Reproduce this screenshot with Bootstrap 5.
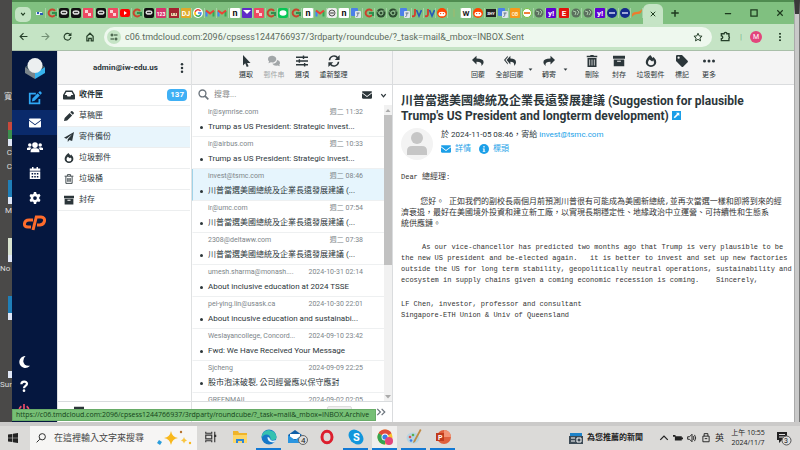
<!DOCTYPE html>
<html lang="zh-Hant">
<head>
    <meta charset="UTF-8">
    <meta name="viewport" content="width=device-width, initial-scale=1">
    <title>Roundcube Webmail</title>
    <link href="https://cdn.jsdelivr.net/npm/bootstrap@5.3.0/dist/css/bootstrap.min.css" rel="stylesheet">
    <style>
        body { font-family: Roboto, "Noto Sans CJK TC", sans-serif; font-size: 8px; line-height: 12px; color: #2c363a; background: #4a4948; }
        button, input { font-family: inherit; color: inherit; background: none; border: 0; padding: 0; }
        a { text-decoration: none; color: inherit; }
        svg { display: block; flex: none; }
        .ic { width: 12px; height: 12px; fill: currentColor; }
        .ic-sm { width: 10px; height: 10px; }
        .ic-lg { width: 14px; height: 14px; }
        .ic-line { fill: none; stroke: currentColor; stroke-width: 2; }

        /* desktop behind the window */
        .desk { width: 12px; color: #ddd; padding-top: 90px; line-height: 14px; white-space: nowrap; }
        .desk-item { height: 58px; }
        .desk-item:first-child { height: 32px; }
        .desk-pic { height: 24px; width: 4px; margin-left: 8px; border-bottom: 7px solid #dfe6f5; }
        .pic-green { background: #3d8f4c; border-top: 8px solid #c9493c; }
        .pic-blue { background: #1f7fb8; }
        .pic-page { background: #d9e3cf; }
        .edge { width: 6px; background: #c9c9c9; border-left: 1px solid #aaa; border-right: 1px solid #777; border-top: 14px solid #393939; }

        /* browser */
        .tabs { height: 24px; background: #80c080; border-top: 2px solid #4f8c50; color: #1d3a1e; }
        .tab-menu { width: 16px; height: 15px; margin: 2px 3px 0; border-radius: 5px; background: #c3e3c3; }
        .tab-item { height: 10px; border-right: 1px solid #a5d2a5; min-width: 0; }
        .fav { width: 10px; height: 10px; }
        .tab-on { width: 20px; height: 20px; border-radius: 6px 6px 0 0; background: #c5e4c5; }
        .win-btns { width: 131px; padding: 0 9px 0 6px; }
        .urlbar { height: 27px; background: #c5e4c5; border-bottom: 1px solid #a9bfa9; color: #26402a; padding: 0 8px 0 7px; }
        .urlbox { height: 20px; border-radius: 10px; background: #eef8ee; padding: 0 9px 0 3px; margin-left: 9px; }
        .url-info { width: 14px; height: 14px; border-radius: 7px; background: #c5e4c5; }
        .url-text { font-size: 9px; color: #5c6b5d; }
        .avatar-m { width: 12px; height: 12px; border-radius: 6px; background: #e2457c; color: #fff; font-size: 7px; }

        /* webmail */
        .side { width: 45px; background: #05173f; color: #fff; }
        .side-logo { height: 34px; }
        .side-link { height: 25px; }
        .side-link.on { background: #0a2a6b; }
        .side-foot { height: 24px; padding-left: 6px; }
        .side-edit { color: #2fa8f5; }
        .side-exit { color: #f0506a; }
        .folders { width: 135px; border-right: 1px solid #dfe1e2; border-left: 1px solid #dfe1e2; }
        .bar { height: 34px; background: #f4f4f4; border-bottom: 1px solid #dadcde; flex: none; }
        .user { font-size: 8px; font-weight: 700; }
        .folder { height: 21px; border-bottom: 1px solid #eceeef; padding: 0 3px 0 5px; margin-right: 1px; }
        .folder.on { background: #e8f5fc; }
        .count { background: #3fb0f5; color: #fff; border-radius: 4px; padding: 0 3px; font-size: 8px; }
        .foot { height: 21px; border-top: 1px solid #d9dcde; flex: none; }
        .mails { width: 201px; border-right: 1px solid #dadcde; }
        .tool { min-width: 27px; padding: 0 4px; font-size: 7px; line-height: 10px; gap: 3px; }
        .tool-off { color: #a2a6a8; }
        .caret { width: 8px; padding-top: 4px; }
        .caret-wide { margin-right: 8px; }
        .find { height: 20px; flex: none; padding: 0 5px 0 6px; }
        .find input { min-width: 0; font-size: 8px; outline: 0; }
        .find input::placeholder { color: #888; }
        .mail { height: 32px; border-bottom: 1px solid #eef0f1; padding: 1px 21px 0 15px; border-left: 1px solid transparent; }
        .mail.on { background: #e6f5fd; border-left-color: #9fd3e8; }
        .mail-top { font-size: 7px; line-height: 13px; color: #7d8589; }
        .mail-sub { font-size: 8px; line-height: 16px; padding-right: 5px; }
        .mail-sub.dot::before { content: ""; float: left; width: 3px; height: 3px; border-radius: 2px; background: #2c363a; margin: 7px 0 0 -8px; }
        .mail-title { display: block; }
        .scroll { width: 8px; background: #f1f1f1; color: #aaa; }
        .thumb { height: 150px; background: #c1c1c1; }
        .page-no { width: 25px; height: 12px; background: #eee; border: 1px solid #ddd; border-radius: 2px; }

        .subject { font-size: 12px; line-height: 15px; font-weight: 700; padding: 9px 0 0; margin: 0; }
        .face { width: 32px; height: 32px; }
        .meta { font-size: 8px; line-height: 14px; }
        .sky { color: #1b9fe8; }
        .letter { font-family: "Liberation Mono", "Noto Sans CJK TC", monospace; font-size: 7px; line-height: 11px; padding-top: 11px; color: #333; }
        .letter p { margin: 0 0 13px; white-space: pre; }
        .letter .han { font-size: 8px; }

        .status { left: 0; bottom: 1px; height: 12px; background: #76bf75; color: #14421a; padding: 0 6px 0 3px; font-family: "Open Sans", sans-serif; font-size: 7px; white-space: nowrap; border: 1px solid #68ac68; line-height: 10px; }

        /* taskbar */
        .task { height: 28px; background: #dbdad8; border-top: 4px solid #cbcac9; color: #222; flex: none; }
        .task-find { width: 167px; background: #f6f5f4; padding: 0 5px 0 6px; }
        .task-find input { font-size: 9px; min-width: 0; width: 98px; }
        .task-find input::placeholder { color: #444; opacity: 1; }
        .task-apps { padding-left: 1px; }
        .app { width: 25px; height: 24px; border-bottom: 2px solid transparent; }
        .app.open { border-bottom-color: #1379d4; }
        .app.front { background: #f0efee; }
        .app-ic { width: 16px; height: 16px; }
        .task-lang { font-size: 9px; }
        .clock { font-size: 7px; line-height: 10px; width: 48px; font-family: "Open Sans", "Noto Sans CJK TC", sans-serif; }
    </style>
</head>
<body class="vh-100 d-flex flex-column overflow-hidden">

    <svg class="d-none">
        <symbol id="i-down" viewBox="0 0 16 16"><path d="M3 5l5 6 5-6" fill="none" stroke="currentColor" stroke-width="3"/></symbol>
        <symbol id="i-caret" viewBox="0 0 16 16"><path d="M2 5h12l-6 7z"/></symbol>
        <symbol id="i-up" viewBox="0 0 16 16"><path d="M3 11l5-6 5 6z"/></symbol>
        <symbol id="i-x" viewBox="0 0 16 16"><path d="M2 2l12 12M14 2L2 14" stroke="currentColor" stroke-width="2.600"/></symbol>
        <symbol id="i-dots" viewBox="0 0 16 16"><circle cx="8" cy="2" r="2"/><circle cx="8" cy="8" r="2"/><circle cx="8" cy="14" r="2"/></symbol>
        <symbol id="i-more" viewBox="0 0 16 16"><circle cx="2" cy="8" r="2"/><circle cx="8" cy="8" r="2"/><circle cx="14" cy="8" r="2"/></symbol>
        <symbol id="i-left" viewBox="0 0 16 16"><path d="M15 8H3M8 2L2 8l6 6" fill="none" stroke="currentColor" stroke-width="2"/></symbol>
        <symbol id="i-right" viewBox="0 0 16 16"><path d="M1 8h12M8 2l6 6-6 6" fill="none" stroke="currentColor" stroke-width="2"/></symbol>
        <symbol id="i-reload" viewBox="0 0 16 16"><path d="M13 5a6 6 0 1 0 1 4" fill="none" stroke="currentColor" stroke-width="2"/><path d="M15 1v6H9z"/></symbol>
        <symbol id="i-home" viewBox="0 0 16 16"><path d="M3 14V7l5-5 5 5v7h-3v-4H6v4z" fill="none" stroke="currentColor" stroke-width="2"/></symbol>
        <symbol id="i-tune" viewBox="0 0 16 16"><path d="M8 4h7M1 12h7" stroke="currentColor" stroke-width="2"/><circle cx="4" cy="4" r="2" fill="none" stroke="currentColor" stroke-width="2"/><circle cx="12" cy="12" r="2" fill="none" stroke="currentColor" stroke-width="2"/></symbol>
        <symbol id="i-star" viewBox="0 0 16 16"><path d="M8 2l2 4.300 4.500.4-3.400 3 1 4.500L8 11.800l-4 2.400 1-4.500-3.500-3L6 6.300z" fill="none" stroke="currentColor" stroke-width="1.600"/></symbol>
        <symbol id="i-puzzle" viewBox="0 0 16 16"><path d="M2 4h4a2 2 0 0 1 4 0h3v4a2 2 0 0 1 0 3v3H2v-3a2 2 0 0 0 0-4z" fill="none" stroke="currentColor" stroke-width="2"/></symbol>
        <symbol id="i-edit" viewBox="0 0 16 16"><path d="M9 3H2v11h11V9" fill="none" stroke="currentColor" stroke-width="2"/><path d="M5 8.500l6-6 2.500 2.500-6 6L4.500 12zM11.800 1.800L13 .6a1 1 0 0 1 1.400 0l1 1a1 1 0 0 1 0 1.400l-1.200 1.200z"/></symbol>
        <symbol id="i-mail" viewBox="0 0 16 16"><path d="M0 3.500C0 2.700.7 2 1.500 2h13c.8 0 1.500.7 1.500 1.500L8 9.500zM0 5l8 6 8-6v7.500c0 .8-.7 1.500-1.500 1.500h-13C.7 14 0 13.300 0 12.500z"/></symbol>
        <symbol id="i-users" viewBox="0 0 20 16"><circle cx="3.500" cy="5" r="2.200"/><circle cx="16.500" cy="5" r="2.200"/><circle cx="10" cy="5" r="3.500"/><path d="M0 8.500Q3 7 5.500 8.300 4 10 4 11H0zM20 8.500Q17 7 14.500 8.300 16 10 16 11h4zM4.500 14v-2Q5 9 8 9h4q3 0 3.500 3v2z"/></symbol>
        <symbol id="i-cal" viewBox="0 0 16 16"><path fill-rule="evenodd" d="M4 0h2v2h4V0h2v2h3v3H1V2h3zM1 6h14v10H1zM3.500 8v2h2V8zM7 8v2h2V8zM10.500 8v2h2V8zM3.500 12v2h2v-2zM7 12v2h2v-2zM10.500 12v2h2v-2z"/></symbol>
        <symbol id="i-gear" viewBox="0 0 16 16"><path fill-rule="evenodd" d="M6.500 0h3l.5 2.300 1.600.9 2.200-.8 1.600 2.700L13.700 7v2l1.700 1.500-1.600 2.700-2.200-.7-1.600.9-.5 2.600h-3L6 13.400l-1.600-.9-2.200.7L.6 10.500 2.300 9V7L.6 5.200l1.600-2.700 2.200.7L6 2.300zM8 5.500a2.500 2.500 0 1 0 0 5 2.500 2.500 0 0 0 0-5z"/></symbol>
        <symbol id="i-moon" viewBox="0 0 16 16"><path d="M10 0a8 8 0 1 0 6 13Q8 14 7 7 7 2.500 10 0z"/></symbol>
        <symbol id="i-help" viewBox="0 0 16 16"><path d="M4.500 5.500C4.500 1 12 1 12 5c0 3-4 2.800-4 6" fill="none" stroke="currentColor" stroke-width="3"/><circle cx="8" cy="14.200" r="1.800"/></symbol>
        <symbol id="i-power" viewBox="0 0 16 16"><path d="M4.500 3a6.500 6.500 0 1 0 7 0M8 0v8" fill="none" stroke="currentColor" stroke-width="2.200"/></symbol>
        <symbol id="i-inbox" viewBox="0 0 16 16"><path fill-rule="evenodd" d="M3.500 2h9L16 8v5q0 1-1 1H1q-1 0-1-1V8zM4.500 4L2.200 8H5l1 2h4l1-2h2.800l-2.300-4z"/></symbol>
        <symbol id="i-pen" viewBox="0 0 16 16"><path d="M1 11l8-8 4 4-8 8-5 1zM10 2l1.500-1.500q1-.8 2 0l2 2q.8 1 0 2L14 6z"/></symbol>
        <symbol id="i-plane" viewBox="0 0 16 16"><path d="M16 0L0 9l4 1.700L13 3.500 6 11.500V16l2.500-3.200L13 14.500z"/></symbol>
        <symbol id="i-fire" viewBox="0 0 16 16"><path fill-rule="evenodd" d="M7 0q2 2 3 4l1.500-1.500Q15 6 15 9.500A7 6.500 0 0 1 1 9.500Q1 5 7 0zM6 6Q4 8 4 10a4 3.500 0 0 0 8 0q0-1.500-1-3L9.500 8.500z"/></symbol>
        <symbol id="i-bin" viewBox="0 0 16 16"><path d="M1 3.500h14M5.500 3V1h5v2M3 4v11h10V4M6 6.500v6M8 6.500v6M10 6.500v6" fill="none" stroke="currentColor" stroke-width="1.400"/></symbol>
        <symbol id="i-trash" viewBox="0 0 16 16"><path fill-rule="evenodd" d="M1 1h4.500l.5-1h4l.5 1H15v2H1zM2 4h12v12H2zM4.500 6v8h1V6zM7.500 6v8h1V6zM10.500 6v8h1V6z"/></symbol>
        <symbol id="i-box" viewBox="0 0 16 16"><path fill-rule="evenodd" d="M0 1h16v4H0zM1 6h14v9H1zM5.500 7.500v1.500h5V7.500z"/></symbol>
        <symbol id="i-search" viewBox="0 0 16 16"><circle cx="6.500" cy="6.500" r="5" fill="none" stroke="currentColor" stroke-width="2"/><path d="M10 10l5 5" stroke="currentColor" stroke-width="2.400"/></symbol>
        <symbol id="i-cursor" viewBox="0 0 16 16"><path d="M4 0v14l3-3 2 5 2.500-1-2-4.500H14z"/></symbol>
        <symbol id="i-chat" viewBox="0 0 16 16"><path d="M0 5.500a5.500 4.500 0 1 1 4 4.300L.5 11 1.500 8.500Q0 7 0 5.500zM12 6.500q4 .7 4 4 0 1.300-1 2.200l.8 2.300-3-1a6 4.500 0 0 1-7-2.500Q11.500 11.500 12 6.500z"/></symbol>
        <symbol id="i-sliders" viewBox="0 0 16 16"><path d="M0 3h16M0 8h16M0 13h16M10 .8v4.400M4.500 5.800v4.400M11.500 10.800v4.400" stroke="currentColor" stroke-width="1.900"/></symbol>
        <symbol id="i-sync" viewBox="0 0 16 16"><path d="M2 7a6 6 0 0 1 11-3M14 9a6 6 0 0 1-11 3" fill="none" stroke="currentColor" stroke-width="2"/><path d="M15.500 0v6.500H9zM.5 16V9.500H7z"/></symbol>
        <symbol id="i-reply" viewBox="0 0 16 16"><path d="M6 1v3.500q9.500 0 9.500 5 0 3-3 5 1.500-5.500-6.500-5.500V12.500L0 6.800z"/></symbol>
        <symbol id="i-replyall" viewBox="0 0 16 16"><path d="M8.500 1v3.500q7.500 0 7.500 5 0 3-2.500 5 1-5.500-5-5.500v3.500L3.500 6.800zM5 1v2L1.800 6.800 5 10.500v2L0 6.800z"/></symbol>
        <symbol id="i-forward" viewBox="0 0 16 16"><path d="M10 1v3.500q-9.500 0-9.500 5 0 3 3 5-1.500-5.500 6.500-5.500v3.500l6-5.700z"/></symbol>
        <symbol id="i-tag" viewBox="0 0 16 16"><path fill-rule="evenodd" d="M0 1.500Q0 0 1.500 0H8l7.500 7.500q.8 1 0 2l-6 6q-1 .8-2 0L0 8zM3.500 2a1.500 1.500 0 1 0 0 3 1.500 1.500 0 0 0 0-3z"/></symbol>
        <symbol id="i-ext" viewBox="0 0 16 16"><path d="M0 0h16v16H0z"/><path d="M7 3h6v6l-2-2-6 6-2-2 6-6z" fill="#fff"/></symbol>
        <symbol id="i-info" viewBox="0 0 16 16"><circle cx="8" cy="8" r="8"/><path d="M6 7h3v4h1v1.500H6V11h1V8.500H6zM7 3h2v2.500H7z" fill="#fff"/></symbol>
        <symbol id="i-next" viewBox="0 0 16 16"><path d="M2 3l5 5-5 5M9 3l5 5-5 5" fill="none" stroke="currentColor" stroke-width="2"/></symbol>
        <symbol id="i-win" viewBox="0 0 16 16"><path d="M0 2.500L7 1.500v6H0zM8 1.300L16 0v7.500H8zM0 8.500h7v6l-7-1zM8 8.500h8V16l-8-1.300z"/></symbol>
    </svg>

    <div class="d-flex flex-grow-1 overflow-hidden">
        <div class="desk overflow-hidden flex-shrink-0">
            <div class="desk-item text-end">寬</div>
            <div class="desk-item"><div class="desk-pic pic-green"></div><div class="text-end">C</div><div class="text-end">C</div></div>
            <div class="desk-item"><div class="desk-pic pic-blue"></div><div class="text-end">M</div></div>
            <div class="desk-item"><div class="desk-pic pic-page"></div><div>No</div></div>
            <div class="desk-item"><div class="desk-pic pic-blue"></div></div>
            <div class="desk-item"><div class="desk-pic"></div><div>Sur</div></div>
        </div>

        <div class="flex-grow-1 d-flex flex-column position-relative overflow-hidden bg-white">
            <div class="tabs d-flex align-items-center flex-shrink-0">
                <button class="tab-menu d-flex align-items-center justify-content-center" aria-label="Search tabs"><svg class="ic"><use href="#i-down" x="3" y="3" width="6" height="6"/></svg></button>
                <div id="tabs" class="d-flex flex-grow-1 overflow-hidden"></div>
                <button class="tab-on d-flex align-items-center justify-content-center align-self-end" aria-label="Close tab"><svg class="ic" viewBox="-8 -8 32 32"><use href="#i-x" width="16" height="16"/></svg></button>
                <div class="win-btns d-flex align-items-center justify-content-between">
                    <button aria-label="New tab"><svg class="ic" viewBox="0 0 16 16"><path d="M8 4v9M3 8h10" stroke="currentColor" stroke-width="2"/></svg></button>
                    <div class="d-flex gap-3">
                        <button aria-label="Minimize"><svg class="ic ic-sm" viewBox="0 0 16 16"><path d="M3 9h10" stroke="currentColor" stroke-width="2"/></svg></button>
                        <button aria-label="Maximize"><svg class="ic ic-sm" viewBox="0 0 16 16"><path class="ic-line" d="M3 3h10v10H3z"/></svg></button>
                        <button aria-label="Close"><svg class="ic ic-sm" viewBox="-3 -3 22 22"><use href="#i-x" width="16" height="16"/></svg></button>
                    </div>
                </div>
            </div>
            <div class="urlbar d-flex align-items-center flex-shrink-0">
                <div class="d-flex gap-2 align-items-center">
                    <button class="pe-1" aria-label="Back"><svg class="ic ic-sm"><use href="#i-left" width="9" height="9"/></svg></button>
                    <button class="pe-1 opacity-50" aria-label="Forward"><svg class="ic ic-sm"><use href="#i-right" width="9" height="9"/></svg></button>
                    <button class="pe-1" aria-label="Reload"><svg class="ic ic-sm"><use href="#i-reload" width="9" height="9"/></svg></button>
                    <button aria-label="Home"><svg class="ic ic-sm"><use href="#i-home" width="10" height="10"/></svg></button>
                </div>
                <div class="urlbox d-flex align-items-center flex-grow-1 gap-1">
                    <span class="url-info d-flex align-items-center justify-content-center"><svg class="ic"><use href="#i-tune" x="2" y="2" width="8" height="8"/></svg></span>
                    <input class="url-text flex-grow-1" aria-label="Address" value="c06.tmdcloud.com:2096/cpsess1244766937/3rdparty/roundcube/?_task=mail&amp;_mbox=INBOX.Sent">
                    <svg class="ic ic-sm"><use href="#i-star"/></svg>
                </div>
                <div class="d-flex align-items-center gap-2 ps-2">
                    <svg class="ic"><use href="#i-puzzle" width="11" height="11"/></svg>
                    <span class="text-success opacity-50">|</span>
                    <span class="avatar-m text-center">M</span>
                    <svg class="ic ms-1" viewBox="-3 -3 22 22"><use href="#i-dots" width="16" height="16"/></svg>
                </div>
            </div>

            <div class="d-flex flex-grow-1 overflow-hidden">
                <nav class="side d-flex flex-column flex-shrink-0">
                    <div class="side-logo d-flex align-items-center justify-content-center">
                        <svg width="20" height="21" viewBox="0 0 20 21"><path d="M0 9l10 6v6L0 15z" fill="#7b858b"/><path d="M20 9l-10 6v6l10-6z" fill="#37b3ee"/><path d="M0 9l10-6 10 6-10 6z" fill="#455a64"/><circle cx="10" cy="7.500" r="7.500" fill="#eceff0"/></svg>
                    </div>
                    <a href="#" class="side-link side-edit d-flex align-items-center justify-content-center" aria-label="Compose"><svg class="ic ic-lg"><use href="#i-edit"/></svg></a>
                    <a href="#" class="side-link on d-flex align-items-center justify-content-center" aria-label="Mail"><svg class="ic"><use href="#i-mail"/></svg></a>
                    <a href="#" class="side-link d-flex align-items-center justify-content-center" aria-label="Contacts"><svg width="16" height="13" fill="currentColor"><use href="#i-users"/></svg></a>
                    <a href="#" class="side-link d-flex align-items-center justify-content-center" aria-label="Calendar"><svg class="ic"><use href="#i-cal"/></svg></a>
                    <a href="#" class="side-link d-flex align-items-center justify-content-center" aria-label="Settings"><svg class="ic"><use href="#i-gear"/></svg></a>
                    <a href="#" class="side-link d-flex align-items-center justify-content-center" aria-label="cPanel">
                        <svg width="23" height="16" viewBox="0 0 23 16" fill="none" stroke="#ff6c2c" stroke-width="3"><path d="M10 5H6q-4 0-4.500 3.500T5 12h3M10 15l3.300-13H18q4 .5 3.500 4T17 10h-3"/></svg>
                    </a>
                    <div class="flex-grow-1"></div>
                    <a href="#" class="side-foot d-flex align-items-center" aria-label="Dark mode"><svg class="ic"><use href="#i-moon"/></svg></a>
                    <a href="#" class="side-foot d-flex align-items-center" aria-label="About"><svg class="ic"><use href="#i-help"/></svg></a>
                    <a href="#" class="side-foot side-exit d-flex align-items-center" aria-label="Logout"><svg class="ic"><use href="#i-power"/></svg></a>
                </nav>

                <div class="folders d-flex flex-column flex-shrink-0">
                    <div class="bar d-flex align-items-center">
                        <span class="user flex-grow-1 text-center ps-3">admin@iw-edu.us</span>
                        <button class="pe-1" aria-label="Menu"><svg class="ic ic-sm"><use href="#i-dots"/></svg></button>
                    </div>
                    <a href="#" class="folder d-flex align-items-center gap-1 fw-bold"><svg class="ic"><use href="#i-inbox"/></svg>收件匣<span class="count ms-auto">137</span></a>
                    <a href="#" class="folder d-flex align-items-center gap-1"><svg class="ic"><use href="#i-pen" x="1" y="1" width="10" height="10"/></svg>草稿匣</a>
                    <a href="#" class="folder on d-flex align-items-center gap-1"><svg class="ic"><use href="#i-plane" x="1" y="1" width="10" height="10"/></svg>寄件備份</a>
                    <a href="#" class="folder d-flex align-items-center gap-1"><svg class="ic"><use href="#i-fire" x="1" y="1" width="10" height="10"/></svg>垃圾郵件</a>
                    <a href="#" class="folder d-flex align-items-center gap-1"><svg class="ic"><use href="#i-bin" x="1" y="1" width="10" height="10"/></svg>垃圾桶</a>
                    <a href="#" class="folder d-flex align-items-center gap-1"><svg class="ic"><use href="#i-box" x="1" y="1" width="10" height="10"/></svg>封存</a>
                    <div class="foot mt-auto ps-3 pt-1"><svg class="ic ic-sm"><use href="#i-box"/></svg></div>
                </div>

                <div class="mails d-flex flex-column flex-shrink-0">
                    <div class="bar d-flex justify-content-center align-items-center">
                        <button class="tool d-flex flex-column align-items-center"><svg class="ic"><use href="#i-cursor"/></svg>選取</button>
                        <button class="tool tool-off d-flex flex-column align-items-center"><svg class="ic"><use href="#i-chat"/></svg>郵件串</button>
                        <button class="tool d-flex flex-column align-items-center"><svg class="ic"><use href="#i-sliders"/></svg>選項</button>
                        <button class="tool d-flex flex-column align-items-center"><svg class="ic"><use href="#i-sync"/></svg>重新整理</button>
                    </div>
                    <div class="find d-flex align-items-center gap-1">
                        <svg class="ic text-secondary"><use href="#i-search" width="11" height="11"/></svg>
                        <input class="flex-grow-1" placeholder="搜尋..." aria-label="搜尋">
                        <svg class="ic ic-sm me-1"><use href="#i-mail"/></svg>
                        <svg width="7" height="7"><use href="#i-down"/></svg>
                    </div>
                    <div class="d-flex flex-grow-1 overflow-hidden">
                        <div id="mails" class="flex-grow-1 overflow-hidden"></div>
                        <div class="scroll d-flex flex-column">
                            <svg class="ic ic-sm" viewBox="0 -3 20 20"><use href="#i-up" width="16" height="16"/></svg>
                            <div class="thumb"></div>
                            <svg class="ic ic-sm mt-auto" viewBox="0 -3 20 20"><use href="#i-caret" width="16" height="16"/></svg>
                        </div>
                    </div>
                    <div class="foot d-flex justify-content-end align-items-start pt-1 gap-4 pe-1">
                        <span class="page-no"></span>
                        <button class="text-secondary" aria-label="Last page"><svg class="ic"><use href="#i-next" y="1" width="10" height="10"/></svg></button>
                    </div>
                </div>

                <main class="flex-grow-1 d-flex flex-column overflow-hidden">
                    <div class="bar d-flex justify-content-center align-items-center">
                        <button class="tool d-flex flex-column align-items-center"><svg class="ic"><use href="#i-reply"/></svg>回覆</button>
                        <button class="tool d-flex flex-column align-items-center"><svg class="ic"><use href="#i-replyall"/></svg>全部回覆</button>
                        <button class="caret" aria-label="Reply options"><svg width="5" height="5" fill="currentColor"><use href="#i-caret"/></svg></button>
                        <button class="tool d-flex flex-column align-items-center"><svg class="ic"><use href="#i-forward"/></svg>轉寄</button>
                        <button class="caret caret-wide" aria-label="Forward options"><svg width="5" height="5" fill="currentColor"><use href="#i-caret"/></svg></button>
                        <button class="tool d-flex flex-column align-items-center"><svg class="ic"><use href="#i-trash"/></svg>刪除</button>
                        <button class="tool d-flex flex-column align-items-center"><svg class="ic"><use href="#i-box"/></svg>封存</button>
                        <button class="tool d-flex flex-column align-items-center"><svg class="ic"><use href="#i-fire"/></svg>垃圾郵件</button>
                        <button class="tool d-flex flex-column align-items-center"><svg class="ic"><use href="#i-tag"/></svg>標記</button>
                        <button class="tool d-flex flex-column align-items-center"><svg class="ic"><use href="#i-more"/></svg>更多</button>
                    </div>
                    <div class="px-2">
                        <h1 class="subject">川普當選美國總統及企業長遠發展建議 (Suggestion for plausible<br>Trump's US President and longterm development) <a href="#" class="sky d-inline-block" aria-label="Open in new window"><svg width="9" height="9" fill="currentColor"><use href="#i-ext"/></svg></a></h1>
                        <div class="d-flex gap-2 pt-1">
                            <svg class="face" viewBox="0 0 32 32"><circle cx="16" cy="16" r="16" fill="#f3f3f3"/><circle cx="16" cy="10" r="6" fill="#c6c6c6"/><path d="M6 27v-4q0-5 5-5h10q5 0 5 5v4z" fill="#c6c6c6"/></svg>
                            <div class="meta">
                                <div>於 2024-11-05 08:46，寄給 <a href="#" class="sky">invest@tsmc.com</a></div>
                                <div class="d-flex gap-2 sky">
                                    <a href="#" class="d-flex align-items-center gap-1"><svg class="ic ic-sm"><use href="#i-mail"/></svg>詳情</a>
                                    <a href="#" class="d-flex align-items-center gap-1"><svg class="ic ic-sm"><use href="#i-info"/></svg>標頭</a>
                                </div>
                            </div>
                        </div>
                        <div class="letter">
<p>Dear <span class="han">總經理</span>:</p>
<p class="han">    您好。 正如我們的副校長兩個月前預測川普很有可能成為美國新總統,並再次當選一樣和即將到來的經
濟衰退，最好在美國境外投資和建立新工廠，以實現長期穩定性、地緣政治中立運營、可持續性和生態系
統供應鏈。</p>
<p>     As our vice-chancellor has predicted two months ago that Trump is very plausible to be
the new US president and be-elected again.   it is better to invest and set up new factories
outside the US for long term stability, geopolitically neutral operations, sustainability and
ecosystem in supply chains given a coming economic recession is coming.    Sincerely,</p>
<p>LF Chen, investor, professor and consultant
Singapore-ETH Union &amp; Univ of Queensland</p>
                        </div>
                    </div>
                </main>
            </div>
            <div class="status position-absolute">https://c06.tmdcloud.com:2096/cpsess1244766937/3rdparty/roundcube/?_task=mail&amp;_mbox=INBOX.Archive</div>
        </div>
        <div class="edge flex-shrink-0"></div>
    </div>

    <footer class="task d-flex">
        <button class="px-2 d-flex align-items-center" aria-label="Start"><svg class="ic ic-sm"><use href="#i-win"/></svg></button>
        <div class="task-find d-flex align-items-center gap-2 ms-1">
            <svg class="ic ic-sm" viewBox="0 0 16 16"><circle cx="10" cy="6" r="5" fill="none" stroke="currentColor" stroke-width="1.500"/><path d="M6 10l-5 5" stroke="currentColor" stroke-width="1.500"/></svg>
            <input placeholder="在這裡輸入文字來搜尋" aria-label="Search">
            <svg width="36" height="18" viewBox="0 0 36 18"><path d="M15 2q1 6 7 7-6 1-7 7-1-6-7-7 6-1 7-7z" fill="#f8b81c"/><path d="M28 8q.5 3 3 3.500-2.500.5-3 3-.5-2.500-3-3 2.500-.5 3-3.500z" fill="#f8c541"/><path d="M3 11l3 2-2 3-3-2z" fill="#2a9ddb"/><circle cx="25" cy="3" r="1.200" fill="#b5722d"/><circle cx="34" cy="14" r="1.200" fill="#f8b81c"/></svg>
        </div>
        <div class="task-apps d-flex gap-1">
            <button class="app d-flex align-items-center justify-content-center" aria-label="Task view"><svg class="ic" viewBox="0 0 16 16"><path d="M1 1v2h8V1M1 15v-2h8v2M1 5.500h8v5H1zM13 1v14" fill="none" stroke="#333" stroke-width="1.500"/><path d="M12 5h3v3h-3z" fill="#333"/></svg></button>
            <button class="app d-flex align-items-center justify-content-center" aria-label="File Explorer"><svg class="app-ic" viewBox="0 0 16 16"><path d="M1 2h5l1 2h8v10H1z" fill="#f0b429"/><path d="M1 6h14v8H1z" fill="#fcd667"/><path d="M4 14v-4h8v4h-2v-2H6v2z" fill="#2f86d6"/></svg></button>
            <button class="app open d-flex align-items-center justify-content-center" aria-label="Edge"><svg class="app-ic" viewBox="0 0 16 16"><circle cx="8" cy="8" r="7.500" fill="#1677c8"/><path d="M.7 7A7.500 7.500 0 0 1 15.500 8q0 3-3.500 3-3 0-2.500-2Q9 5.500 5.500 5.500T.7 9z" fill="#35c1b0"/><path d="M6.500 8Q6 13 12.500 13.500 15 12 15 11q-5 2-6-1-.5-2-2.500-2z" fill="#e5f3fb"/></svg></button>
            <button class="app d-flex align-items-center justify-content-center" aria-label="Mail"><svg width="20" height="16" viewBox="0 0 20 16"><path d="M0 6l7-5 7 5v8H0z" fill="#0f5fa8"/><path d="M2 5h10v5H2z" fill="#fff"/><path d="M0 6l7 5 7-5v8H0z" fill="#2a95e0"/><circle cx="15" cy="11" r="4.500" fill="#ddd" stroke="#666"/><text x="13" y="14" font-size="8" fill="#222">4</text></svg></button>
            <button class="app d-flex align-items-center justify-content-center" aria-label="Opera"><svg class="app-ic" viewBox="0 0 16 16"><ellipse cx="8" cy="8" rx="5" ry="5.800" fill="none" stroke="#dc1e2d" stroke-width="3"/></svg></button>
            <button class="app open d-flex align-items-center justify-content-center" aria-label="Skype"><svg class="app-ic" viewBox="0 0 16 16"><circle cx="6" cy="6" r="5.500" fill="#1296dc"/><circle cx="10" cy="10" r="5.500" fill="#1296dc"/><circle cx="8" cy="8" r="6.500" fill="#1296dc"/><text x="5" y="12" font-size="11" font-weight="700" fill="#fff">S</text></svg></button>
            <button class="app open front d-flex align-items-center justify-content-center" aria-label="Chrome"><svg class="app-ic" viewBox="0 0 16 16"><circle cx="8" cy="8" r="7.500" fill="#f9c22e"/><path d="M8 8L1.500 4.200a7.500 7.500 0 0 1 13 0z" fill="#e04a3a"/><path d="M8 8L1.500 4.200A7.500 7.500 0 0 0 8 15.500z" fill="#35a552"/><circle cx="8" cy="8" r="3.500" fill="#fff"/><circle cx="8" cy="8" r="2.600" fill="#3b7de9"/><circle cx="12" cy="12" r="4" fill="#e2457c"/></svg></button>
            <button class="app open d-flex align-items-center justify-content-center" aria-label="Paint"><svg class="app-ic" viewBox="0 0 16 16"><ellipse cx="7" cy="9" rx="6.500" ry="5.500" fill="#b6d5e3"/><circle cx="4" cy="8" r="1.300" fill="#d9534f"/><circle cx="7" cy="6" r="1.300" fill="#5aaf4c"/><circle cx="5" cy="11.500" r="1.300" fill="#3b7de9"/><path d="M14 0l1.500 1L9 13l-2 1 .5-2z" fill="#c08a43"/></svg></button>
            <button class="app open d-flex align-items-center justify-content-center" aria-label="PowerPoint"><svg class="app-ic" viewBox="0 0 16 16"><circle cx="9" cy="8" r="7" fill="#e0613d"/><path d="M9 1a7 7 0 0 1 7 7H9z" fill="#f39475"/><path d="M1 4h8v8H1z" fill="#c13b1b"/><text x="3" y="11" font-size="7" font-weight="700" fill="#fff">P</text></svg></button>
        </div>
        <div class="ms-auto d-flex align-items-center pe-2">
            <svg class="me-1" width="14" height="11" viewBox="0 0 14 11"><path d="M1 0h12v3H1z" fill="#1d83c9"/><path d="M0 3h14v8H0z" fill="#3c4a55"/><path d="M2 5h4M2 8h4M8 5h4v4H8z" stroke="#fff" fill="none"/></svg>
            <span class="fw-bold me-3">為您推薦的新聞</span>
            <svg class="ic ic-sm me-1" viewBox="0 0 16 16"><path d="M2 11l6-6 6 6" fill="none" stroke="currentColor" stroke-width="2"/></svg>
            <svg class="ic ic-sm me-1" viewBox="0 0 16 16"><path d="M3 5h11v7H3zM14 7h2v3h-2zM0 3h4v3H0z"/></svg>
            <svg class="ic ic-sm me-1" viewBox="0 0 16 16"><path d="M1 6h3l4-4v12l-4-4H1zM10 5q2 3 0 6M12 3q4 5 0 10" fill="none" stroke="currentColor" stroke-width="1.500"/></svg>
            <svg class="ic ic-sm me-1" viewBox="0 0 16 16"><path d="M3 5h10v9H3zM5 5V1h6v4M6 9h4" fill="none" stroke="currentColor" stroke-width="1.500"/></svg>
            <span class="task-lang">英</span>
            <div class="clock text-center">上午 10:55<br>2024/11/7</div>
            <svg class="ms-1" width="16" height="16" viewBox="0 0 16 16"><path d="M1 2h10v8H6l-3 3v-3H1z" fill="#222"/><path d="M3 4.500h6M3 7h6" stroke="#ddd"/><circle cx="10.500" cy="10.500" r="4.500" fill="#ddd" stroke="#555"/><text x="8" y="13" font-size="7" fill="#222">3</text></svg>
        </div>
    </footer>

    <script>
        const square = (bg, text = '', color = '#fff', size = 7) =>
            `<rect width="10" height="10" rx="1" fill="${bg}"/><text x="5" y="8" font-size="${size}" font-weight="700" text-anchor="middle" fill="${color}">${text}</text>`;
        const icons = {
            iw: '<path d="M1 4h6v3H1z" fill="#e8eefc"/><path d="M2 5h2M5 6h3" stroke="#2b58b8" stroke-width="2"/>',
            c: '<path d="M8 3a3.500 3.500 0 1 0 0 4" fill="none" stroke="#c8452f" stroke-width="2"/><path d="M5 5h4v3" fill="none" stroke="#2f8f4e" stroke-width="2"/>',
            bk: '<rect width="10" height="10" rx="2" fill="#111"/><ellipse cx="5" cy="4.500" rx="3.500" ry="2.300" fill="#ddd"/><path d="M3 4.500h4" stroke="#333" stroke-width="1.200"/>',
            pk: '<rect width="10" height="10" rx="1" fill="#ee4861"/><path d="M2 2h3v3H2zM5 5h3v3H5z" fill="#fbd0d6"/>',
            yt: '<rect y="1" width="10" height="8" rx="2" fill="#f00"/><path d="M4 3l3 2-3 2z" fill="#fff"/>',
            num: square('#d6336c', '123', '#fff', 5),
            fc: '<rect width="10" height="10" fill="#a3232f"/><path d="M2 5h6v3H2z" fill="#f1c9a5"/><path d="M3 6h1M6 6h1" stroke="#222"/>',
            dj: square('#e0a92a', 'DJ', '#fff', 7),
            go: '<circle cx="5" cy="5" r="5" fill="#fff"/><path d="M7.500 3A3 3 0 0 0 2.200 4" fill="none" stroke="#ea4335" stroke-width="1.500"/><path d="M2.200 4a3 3 0 0 0 1 3.500" fill="none" stroke="#fbbc05" stroke-width="1.500"/><path d="M3 7.300A3 3 0 0 0 7.500 7" fill="none" stroke="#34a853" stroke-width="1.500"/><path d="M5 5h3q0 1.500-.8 2.200" fill="none" stroke="#4285f4" stroke-width="1.500"/>',
            gm: '<path d="M1.500 8.500V3" stroke="#4285f4" stroke-width="2"/><path d="M8.500 8.500V3" stroke="#34a853" stroke-width="2"/><path d="M1 2.500l4 3 4-3" fill="none" stroke="#ea4335" stroke-width="2"/>',
            n: square('#fff', 'n', '#111', 9),
            ml: '<rect width="10" height="10" rx="1" fill="#5f2bc8"/><path d="M1 2h8L5 6z" fill="#fff"/>',
            ln: '<rect width="10" height="10" rx="2" fill="#06c755"/><ellipse cx="5" cy="5" rx="3.500" ry="2.700" fill="#fff"/>',
            gp: '<rect width="10" height="10" rx="2" fill="#eee"/><circle cx="5" cy="5" r="3" fill="none" stroke="#555"/><path d="M3 4l4 2M3 6l4-2" stroke="#555" stroke-width=".7"/>',
            tr: '<rect width="7" height="8" rx="1" fill="#4a80e8"/><rect x="4" y="3" width="6" height="7" rx="1" fill="#dfe5ec"/><path d="M5.500 5h3M7 5q0 3-1.500 4" fill="none" stroke="#678"/>',
            ch: '<circle cx="5" cy="5" r="4.500" fill="#2d4d31"/><circle cx="5" cy="5" r="2" fill="none" stroke="#9fd09f"/><path d="M5 3h4M3 6L1.500 3" stroke="#9fd09f" stroke-width=".7"/>',
            jv: '<path d="M3 1v5q0 3-3 2" fill="none" stroke="#d63c2c" stroke-width="1.800"/><path d="M4.500 2L7 8l2.500-6" fill="none" stroke="#2659b8" stroke-width="1.600"/>',
            rd: '<circle cx="5" cy="5" r="5" fill="#ff4500"/><ellipse cx="5" cy="6" rx="3.500" ry="2.300" fill="#fff"/><circle cx="3.600" cy="5.600" r=".7" fill="#f40"/><circle cx="6.400" cy="5.600" r=".7" fill="#f40"/>',
            ft: '<path d="M5 1v8" stroke="#a4b86b"/>',
            w: square('#fff', 'W', '#222', 8),
            sh: '<rect y="1" width="10" height="8" fill="#222"/><text x="5" y="7" font-size="4" font-weight="700" text-anchor="middle" fill="#fff">SHY</text>',
            ob: square('#f59a1b', 'OB', '#ffe9c7', 5),
            bl: '<circle cx="5" cy="5" r="4.500" fill="#fff" stroke="#7ac143"/><path d="M2 5h6" stroke="#f0803c" stroke-width="2"/>',
            gl: '<circle cx="5" cy="5" r="4.500" fill="#5b6f5e"/><path d="M2 3l3 1-1 3M6 2l2 2-2 3" fill="none" stroke="#a9c9a9"/>',
            y: square('#5f01d1', 'y!', '#fff', 8),
            e: square('#e3120b', 'E', '#fff', 8),
            nv: '<circle cx="5" cy="5" r="5" fill="#15298c"/><path d="M2 5h6" stroke="#cfd6f5" stroke-width="1.500"/>',
            or: '<path d="M0 7q0-3 4-3t6-3q0 5-4 5T0 9z" fill="#ee7b2d"/>'
        };
        const openTabs = 'iw c bk bk pk bk pk yt c bk num fc dj go gm gm n ml pk c ln c n gm gp n tr c ch ch tr jv jv rd ft w rd sh tr ob bl gl y e gl gl y nv nv or';
        document.getElementById('tabs').innerHTML = openTabs.split(' ').map(k =>
            `<div class="tab-item d-flex flex-fill justify-content-center"><svg class="fav" viewBox="0 0 10 10">${icons[k]}</svg></div>`).join('');

        const zh = '川普當選美國總統及企業長遠發展建議 (...';
        const mails = [
            ['ir@symrise.com', '週二 11:32', 'Trump as US President: Strategic Invest...'],
            ['ir@airbus.com', '週二 10:33', 'Trump as US President: Strategic Invest...'],
            ['invest@tsmc.com', '週二 08:46', zh],
            ['ir@umc.com', '週二 07:54', zh],
            ['2308@deltaww.com', '週二 07:38', zh],
            ['umesh.sharma@monash....', '2024-10-31 02:14', 'About inclusive education at 2024 TSSE'],
            ['pei-ying.lin@usask.ca', '2024-10-30 22:01', 'About incusive education and sustainabi...'],
            ['Weslayancollege, Concord...', '2024-09-10 23:42', 'Fwd: We Have Received Your Message'],
            ['Sjcheng', '2024-09-09 22:25', '股市泡沫破裂, 公司經營應以保守應對'],
            ['GREENMAIL', '2024-09-02 02:05', '']
        ];
        document.getElementById('mails').innerHTML = mails.map(([from, date, title], i) => `
            <div class="mail ${i === 2 ? 'on' : ''}">
                <div class="mail-top d-flex justify-content-between text-nowrap"><span>${from}</span><span>${date}</span></div>
                <div class="mail-sub text-nowrap ${title ? 'dot' : ''}"><a href="#" class="mail-title">${title}</a></div>
            </div>`).join('');
    </script>
    <script src="https://cdn.jsdelivr.net/npm/bootstrap@5.3.0/dist/js/bootstrap.bundle.min.js"></script>
</body>
</html>
